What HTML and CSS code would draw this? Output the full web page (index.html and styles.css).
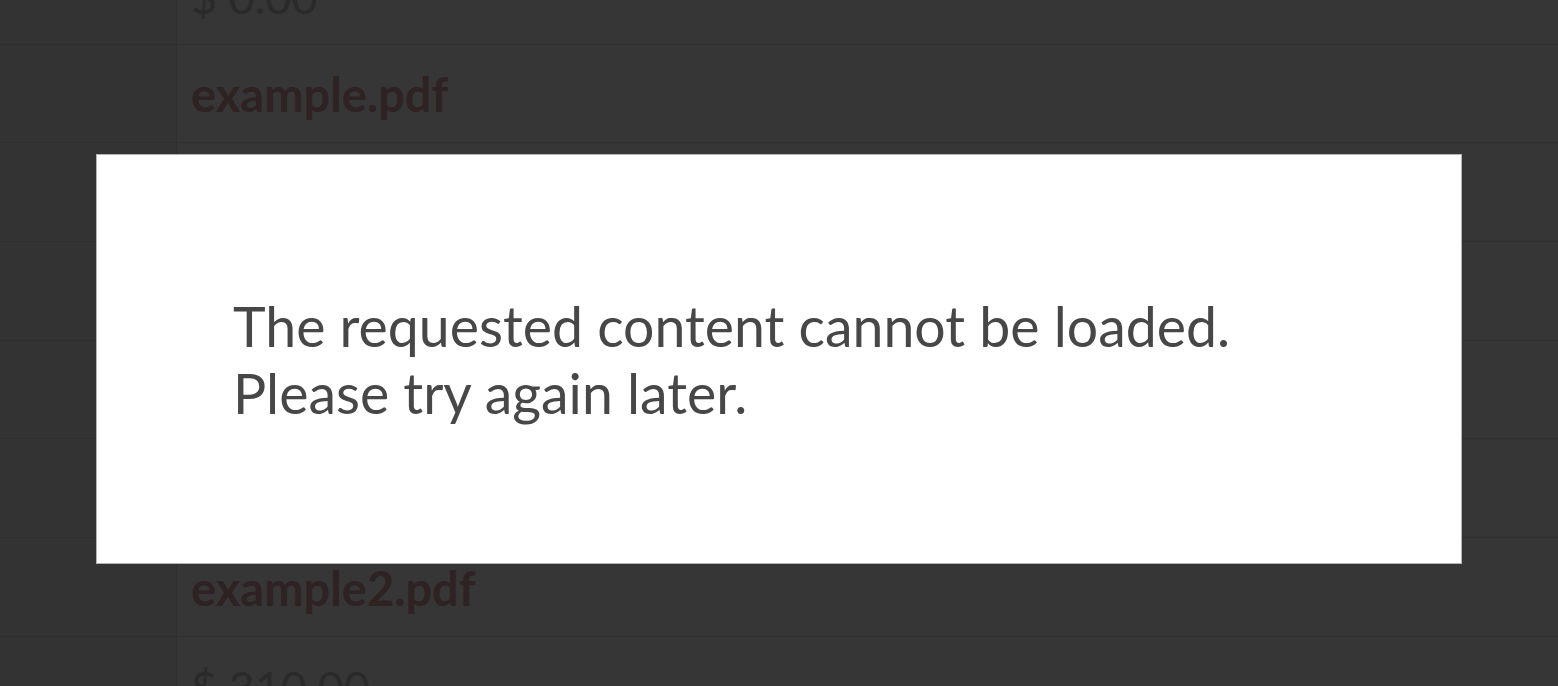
FILE: index.html
```html
<!DOCTYPE html>
<html lang="en">
<head>
<meta charset="utf-8">
<title>Invoices</title>
<link rel="stylesheet" href="styles.css">
</head>
<body>
<div class="page">
  <div class="table">
    <div class="row"><div class="label"></div><div class="cell amount">$ 0.00</div></div>
    <div class="row"><div class="label"></div><div class="cell file">example.pdf</div></div>
    <div class="row"><div class="label"></div><div class="cell"></div></div>
    <div class="row"><div class="label"></div><div class="cell"></div></div>
    <div class="row"><div class="label"></div><div class="cell"></div></div>
    <div class="row"><div class="label"></div><div class="cell"></div></div>
    <div class="row"><div class="label"></div><div class="cell file">example2.pdf</div></div>
    <div class="row"><div class="label"></div><div class="cell amount">$ 310.00</div></div>
  </div>
  <div class="modal">
    <p class="message">The requested content cannot be loaded.<br>Please try again later.</p>
  </div>
</div>
</body>
</html>
```
FILE: styles.css
```css
html, body {
  margin: 0;
  padding: 0;
  height: 100%;
  overflow: hidden;
  background: #343434;
}
.page {
  position: relative;
  width: 1558px;
  height: 686px;
  overflow: hidden;
  font-family: Lato, "Open Sans", sans-serif;
}
.table {
  display: flex;
  flex-direction: column;
  margin-top: -54px;
}
.row {
  display: flex;
  height: 98.67px;
  box-sizing: border-box;
  border-bottom: 1px solid #2f2f2f;
}
.label {
  width: 176px;
  flex: none;
  background: #333333;
  border-right: 1px solid #2f2f2f;
}
.cell {
  flex: 1;
  background: #363636;
  display: flex;
  align-items: center;
  padding-left: 14px;
}
.amount {
  font-size: 45px;
  font-weight: 400;
  color: #2a2a2a;
  padding-top: 4px;
}
.file {
  font-size: 47px;
  font-weight: 700;
  color: #2f2222;
  padding-top: 2px;
}
.modal {
  position: absolute;
  left: 96px;
  top: 154px;
  width: 1366px;
  height: 410px;
  box-sizing: border-box;
  background: #ffffff;
  border: 1px solid #b3b3b3;
  display: flex;
  align-items: center;
  padding: 0 136px;
}
.message {
  margin: 0;
  font-size: 55.4px;
  line-height: 67px;
  color: #474747;
}
```
